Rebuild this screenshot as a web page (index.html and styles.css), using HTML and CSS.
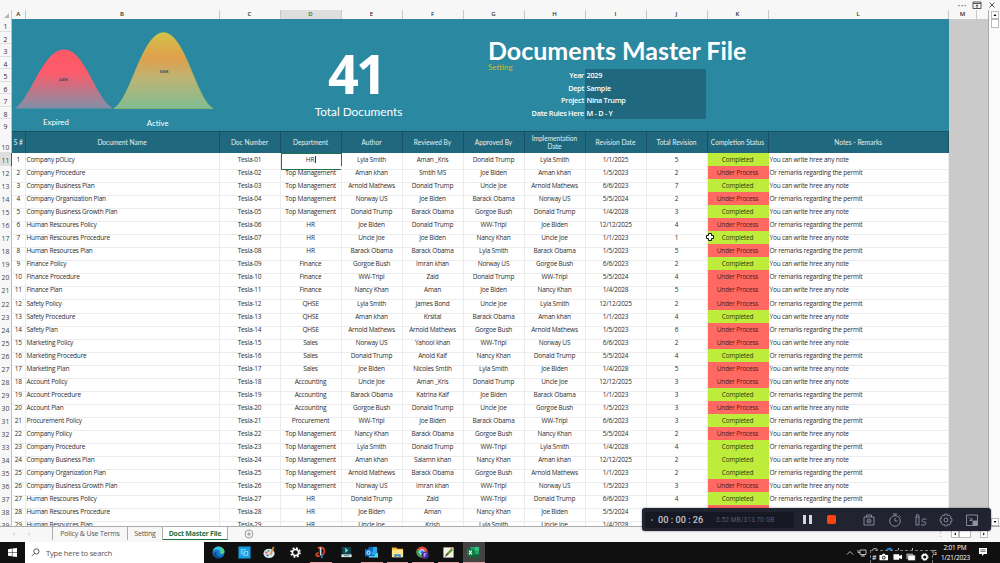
FILE: index.html
```html
<!DOCTYPE html>
<html lang="en">
<head>
    <meta charset="UTF-8">
    <meta name="viewport" content="width=device-width, initial-scale=1.0">
    <title>Documents Master File</title>
    <link rel="stylesheet" href="styles.css">
</head>
<body>
    <div class="window-bar">
        <span class="dots">···</span>
        <svg class="win-icon" viewBox="0 0 10 10"><path d="M1 2h8v6.500H1zM1 3.500h8M5 8V5M3.700 6L5 4.800 6.300 6" /></svg>
        <svg class="win-icon win-close" viewBox="0 0 10 10"><path d="M2.500 2.500l5 5M7.500 2.500l-5 5" /></svg>
    </div>

    <div class="workspace">
        <div class="sheet">
            <div class="row col-letters">
                <span class="corner"><svg viewBox="0 0 5 5"><path d="M5 0v5H0z" /></svg></span>
                <span>A</span><span>B</span><span>C</span><span class="selected">D</span><span>E</span><span>F</span><span>G</span><span>H</span><span>I</span><span>J</span><span>K</span><span>L</span><span>M</span><span></span>
            </div>

            <div class="banner-row">
                <div class="banner-numbers">
                    <span>1</span><span>2</span><span>3</span><span>4</span><span>5</span><span>6</span><span>7</span><span>8</span><span>9</span>
                </div>
                <div class="banner">
                    <div class="chart">
                        <svg viewBox="0 0 208 92">
                            <defs>
                                <linearGradient id="expired" x1="0" y1="0" x2="0" y2="1">
                                    <stop offset="0" stop-color="#ff5866" />
                                    <stop offset="0.400" stop-color="#fb5c6b" />
                                    <stop offset="1" stop-color="#8090a8" />
                                </linearGradient>
                                <linearGradient id="active" x1="0" y1="0" x2="0" y2="1">
                                    <stop offset="0" stop-color="#d2c247" />
                                    <stop offset="0.340" stop-color="#dfa04d" />
                                    <stop offset="0.600" stop-color="#bdb473" />
                                    <stop offset="1" stop-color="#80bd92" />
                                </linearGradient>
                            </defs>
                            <path fill="url(#expired)" d="M3 89.500C19 79 31 30.500 52 30.500S83 79 101 89.500z" />
                            <path fill="url(#active)" stroke="#c5c056" stroke-width="0.800" stroke-opacity="0.600" d="M102 89.500C119 80 130 13.500 151.500 13.500S184 80 201 89.500z" />
                            <text class="pct" x="51.500" y="62">44%</text>
                            <text class="pct" x="152" y="54">56%</text>
                        </svg>
                        <div class="chart-labels">
                            <span>Expired</span>
                            <span class="label-active">Active</span>
                        </div>
                    </div>
                    <div class="total">
                        <div class="total-number">41</div>
                        <div class="total-label">Total Documents</div>
                    </div>
                    <div class="info">
                        <h1>Documents Master File</h1>
                        <a class="setting">Setting</a>
                        <dl>
                            <dt>Year</dt><dd>2029</dd>
                            <dt>Dept</dt><dd>Sample</dd>
                            <dt>Project</dt><dd>Nina Trump</dd>
                            <dt>Date Rules Here</dt><dd>M - D - Y</dd>
                        </dl>
                    </div>
                </div>
            </div>

            <div class="row table-head">
                <span class="num">10</span>
                <span>S #</span><span>Document Name</span><span>Doc Number</span><span>Department</span><span>Author</span><span>Reviewed By</span><span>Approved By</span><span>Implementation<br>Date</span><span>Revision Date</span><span>Total Revision</span><span>Completion Status</span><span>Notes - Remarks</span>
            </div>
            <div id="rows"></div>
        </div>

        <div class="scrollbar">
            <svg class="arrow" viewBox="0 0 8 8"><path d="M2 5.200h4L4 2.800z" /></svg>
            <div class="thumb"></div>
            <svg class="arrow arrow-down" viewBox="0 0 8 8"><path d="M2 2.800h4L4 5.200z" /></svg>
        </div>
    </div>

    <div class="tabs">
        <span class="nav">‹</span><span class="nav">›</span>
        <span class="tab tab-policy">Policy &amp; Use Terms</span>
        <span class="tab tab-setting">Setting</span>
        <span class="tab tab-active">Doct Master File</span>
        <svg class="add" viewBox="0 0 10 10"><circle cx="5" cy="5" r="4" /><path d="M2.800 5h4.400M5 2.800v4.400" /></svg>
        <div class="h-scroll">
            <span class="grip">⋮</span>
            <svg class="arrow" viewBox="0 0 8 8"><path d="M5.200 2v4L2.800 4z" /></svg>
            <div class="h-thumb"></div>
            <svg class="arrow" viewBox="0 0 8 8"><path d="M2.800 2v4L5.200 4z" /></svg>
        </div>
    </div>

    <div class="taskbar">
        <div class="start">
            <svg viewBox="0 0 9 9"><path fill="#fff" d="M0 1.200L3.900.600v3.600H0zM4.400.500L9 0v4.200H4.400zM0 4.700h3.900v3.600L0 7.700zM4.400 4.700H9V9l-4.600-.600z" /></svg>
        </div>
        <div class="search">
            <svg viewBox="0 0 10 10"><circle cx="6" cy="3.800" r="2.900" /><path d="M3.900 5.900L.800 9" /></svg>
            Type here to search
        </div>
        <div class="apps">
            <span class="app">
                <svg viewBox="0 0 14 14"><circle cx="7" cy="7" r="6.400" fill="#1778c9" /><path fill="#35c5d8" d="M.900 5.500C2-.500 11-1.500 13.200 4.800c.600 2-.700 3.700-2.600 3.700-1.900 0-2.700-.700-2-2C9 3.500 3.500 2.500.900 5.500z" /><path fill="#5bd26a" d="M9 1.200c2.600.900 4.800 3.500 4.400 5.500-.500 1.600-2.700 2.200-4.200 1.500C11 6 11 3 9 1.200z" /><path fill="#0b4a93" d="M4.800 6.500c-1 3 1.800 6 6.500 5-3 3-9 2-9.500-2.500C2 7 3.500 6 4.800 6.500z" /></svg>
            </span>
            <span class="app">
                <svg viewBox="0 0 14 14"><path fill="#139de2" d="M.500.500h13v13H.500z" /><path fill="none" stroke="#a3dcfa" d="M8.500 4H3.500v4.500H7V6.500H5M7 6h3.500v4H5.500" /></svg>
            </span>
            <span class="app">
                <svg viewBox="0 0 14 14"><ellipse cx="6.500" cy="8" rx="6" ry="5" fill="#d9e4ee" /><circle cx="3.600" cy="7" r="1.200" fill="#e34d3c" /><circle cx="6" cy="5.200" r="1.200" fill="#4cae54" /><circle cx="5" cy="10" r="1.200" fill="#2f80d1" /><path stroke="#d99342" stroke-width="1.800" d="M8 9.500L11.500 1" /></svg>
            </span>
            <span class="app">
                <svg viewBox="0 0 14 14"><circle cx="7" cy="7" r="4.800" fill="none" stroke="#fff" stroke-width="1.800" stroke-dasharray="2 1.770" /><circle cx="7" cy="7" r="3.300" fill="none" stroke="#fff" stroke-width="1.600" /></svg>
            </span>
            <span class="app open">
                <svg viewBox="0 0 14 14"><path fill="none" stroke="#d63f24" stroke-width="2" d="M6 10.500C1 12 1.500 7.500 5 7.500M4 2.500c4-2.500 8 0 7 4-.500 2-2 3-2 3.500" /><path fill="#c7dff0" d="M6 1l2 1v7L6.500 11z" /><path stroke="#2878c8" stroke-width="2" d="M8.500 9v4" /></svg>
            </span>
            <span class="app">
                <svg viewBox="0 0 14 14"><path fill="#12414e" d="M2 1h10v8H2z" /><path fill="#74efd1" d="M5 2l4 2.700L5 7.500l1-2.800z" /><path fill="#e4ecee" d="M1.500 9h11v3h-11z" /><path fill="#298b9e" d="M4 10h6v1H4z" /></svg>
            </span>
            <span class="app open">
                <svg viewBox="0 0 14 14"><path fill="#28a8ea" d="M4 1h9v9H4z" /><path fill="#0364b8" d="M4 1h4.500v5H4z" /><path fill="#50d9ff" d="M4 8l5 3 5-4v5.500H4z" /><path fill="#0f78d4" d="M0 3.500h7.500V11H0z" /><circle cx="3.800" cy="7.200" r="1.700" fill="none" stroke="#fff" /></svg>
            </span>
            <span class="app open">
                <svg viewBox="0 0 14 14"><path fill="#f2b835" d="M1 1.500h4.500L7 3h6v9H1z" /><path fill="#ffe58a" d="M1 4h12v8H1z" /><path fill="#348fd8" d="M3.500 9h7v3.500h-2v-1.500h-3v1.500h-2z" /></svg>
            </span>
            <span class="app open">
                <svg viewBox="0 0 14 14"><circle cx="6.500" cy="6.500" r="6" fill="#e34a3d" /><path fill="#34a853" d="M6.500 6.500L1.300 3.500a6 6 0 0 0 5 9z" /><path fill="#fbbc05" d="M6.500 6.500h6a6 6 0 0 1-6 6z" /><circle cx="6.500" cy="6.500" r="2.600" fill="#4285f4" stroke="#fff" /><circle cx="9.800" cy="9.800" r="3.900" fill="#4a2b9d" /><path fill="none" stroke="#ddd0ff" stroke-width=".800" d="M8.800 12V8h2.500M8.800 9.800h2" /></svg>
            </span>
            <span class="app open">
                <svg viewBox="0 0 14 14"><path fill="#f3f2e6" d="M1.500 1.500h11v11h-11z" /><path stroke="#61912c" stroke-width="2.400" d="M4.500 10L11 3.500" /><path stroke="#333" d="M3 11.500l3.500-3" /><path stroke="#e7a72c" d="M9 3l3-1" /></svg>
            </span>
            <span class="app open current">
                <svg viewBox="0 0 14 14"><path fill="#21a366" d="M3.500 1H13v12H3.500z" /><path fill="#33c481" d="M8.500 1H13v4H8.500z" /><path fill="#107c41" d="M3.500 5h5v4h-5z" /><path fill="#185c37" d="M3.500 9H13v4H3.500z" /><path fill="#107c41" d="M0 3.500h7.500v7H0z" /><path stroke="#fff" stroke-width="1.100" d="M2.200 5l3 4M5.200 5l-3 4" /></svg>
            </span>
        </div>
        <div class="tray">
            <svg class="chevron" viewBox="0 0 8 8"><path d="M1 5.500l3-3 3 3" /></svg>
            <svg class="monitor" viewBox="0 0 10 8"><path d="M3 1h6v4.500H3zM1 1v2.500h2M6 5.500V7M4 7h4" /></svg>
            <svg class="tray-hidden" viewBox="0 0 60 7"><path d="M3 3.500a2.500 2 0 0 1 5 0M29 1v4M43 1v4" /><circle class="blue" cx="20" cy="4" r="3.200" /></svg>
            <span class="lang">G</span>
            <div class="clock">2:01 PM<br>1/21/2023</div>
            <svg class="note" viewBox="0 0 10 10"><path fill="#fff" d="M1 1h8v6H6L4 9V7H1z" /><path stroke="#333" stroke-width=".700" d="M2.500 2.800h5M2.500 4.400h5" /></svg>
        </div>
        <div class="capture-bar">
            <span>#</span>
            <svg viewBox="0 0 10 8"><path fill="#fff" d="M1 2h2l1-1.500h2L7 2h2.500v5.500H.500V2z" /><circle cx="5" cy="4.700" r="1.500" fill="none" stroke="#111" /></svg>
            <svg viewBox="0 0 10 8"><path fill="#fff" d="M.500 1h6v2l3-1.500v5l-3-1.500v2h-6z" /></svg>
            <svg viewBox="0 0 10 8"><path fill="#bbb" d="M.500.500h7V6h-7z" /><path fill="#fff" stroke="#222" stroke-width=".500" d="M2 2h7.700v5.700H2z" /></svg>
            <svg viewBox="0 0 10 8"><circle cx="5" cy="4" r="2.500" fill="none" stroke="#fff" stroke-width="1.600" /><circle cx="5" cy="4" r="3.500" fill="none" stroke="#fff" stroke-dasharray="1.500 1.250" /></svg>
        </div>
    </div>

    <svg class="cursor" viewBox="0 0 10 10"><path d="M3.500 1.500h3v2h2v3h-2v2h-3v-2h-2v-3h2z" /></svg>

    <div class="recorder">
        <div class="rec-time"><i></i><b>00 : 00 : 26</b><small>3.52 MB/313.70 GB</small></div>
        <div class="pause"></div>
        <div class="stop"></div>
        <div class="rec-tools">
            <svg viewBox="0 0 14 14"><path d="M2 4h10v8H2zM4.500 4V2h5v2" /><circle cx="7" cy="8" r="2" /><circle cx="7" cy="8" r=".400" /></svg>
            <svg viewBox="0 0 14 14"><circle cx="7" cy="8" r="5.300" /><path d="M5 1h4M7 1v1.500M7 5v3h2.500M11.500 2.500l1.200 1.200" /></svg>
            <svg viewBox="0 0 14 14"><path d="M2 3l1.500-2L5 3v9H2zM2 4h3M12.500 6H9.500C7.500 6 7.500 9 9.500 9h1C12.500 9 12.500 12 10 12H7" /></svg>
            <svg viewBox="0 0 14 14"><path d="M5.800 1.200h2.400l.500 1.600 1.600-.700 1.700 1.700-.700 1.500 1.600.500v2.400l-1.600.500.700 1.600-1.700 1.700-1.600-.700-.500 1.600H5.800l-.500-1.600-1.600.700L2 10.300l.700-1.600-1.600-.500V5.800l1.600-.500L2 3.800l1.700-1.700 1.600.700z" /><circle cx="7" cy="7" r="2" /></svg>
            <svg viewBox="0 0 14 14"><path d="M1.500 2h11v10.500h-11zM4 4.500L7 7.500M7 5v2.500H4.500" /><path class="solid" d="M8 8h4v4H8z" /></svg>
        </div>
    </div>

    <script src="script.js"></script>
</body>
</html>
```
FILE: styles.css
```css
* {
    margin: 0;
    padding: 0;
    box-sizing: border-box;
}

body {
    width: 1000px;
    height: 563px;
    overflow: hidden;
    position: relative;
    display: flex;
    flex-direction: column;
    background-color: #f7f7f7;
    font-family: "Open Sans", sans-serif;
    font-size: 6.5px;
    color: #2c2c2c;
}

svg {
    display: block;
}

.window-bar {
    height: 10px;
    display: flex;
    justify-content: flex-end;
    align-items: center;
    padding-right: 3px;
    gap: 5px;
}

.dots {
    font-size: 10px;
    line-height: 10px;
    letter-spacing: 0.5px;
    color: #555;
}

.win-icon {
    width: 10px;
    height: 10px;
    fill: none;
    stroke: #444;
    stroke-width: 0.9;
}

.workspace {
    height: 517px;
    display: flex;
    border-bottom: 1px solid #ababab;
}

.sheet {
    width: 989px;
    overflow: hidden;
    background: linear-gradient(to right, #fff 948px, #cacaca 948px);
    border-right: 1px solid #aaa;
}

.row {
    display: grid;
    grid-template-columns: 12px 13.5px 194px repeat(8, 61px) 61px 180.5px 28px 12px;
}

/* column letters */
.col-letters {
    height: 9px;
    background-color: #f7f7f7;
}

.col-letters span {
    text-align: center;
    line-height: 9px;
    font-size: 6px;
    font-weight: 600;
    border-right: 1px solid #c8c8c8;
}

.col-letters .selected {
    background-color: #dedede;
    border-bottom: 1px solid #217346;
    color: #217346;
}

.col-letters .corner {
    display: flex;
    justify-content: flex-end;
    align-items: flex-end;
    padding: 0 2px 2px 0;
}

.corner svg {
    width: 5px;
    height: 5px;
    fill: #b5b5b5;
}

/* banner */
.banner-row {
    height: 112px;
    display: flex;
}

.banner-numbers {
    width: 12px;
    background-color: #f7f7f7;
    display: flex;
    flex-direction: column;
    border-right: 1px solid #c0c0c0;
}

.banner-numbers span {
    height: 12.5px;
    line-height: 16px;
    text-align: center;
    font-size: 6.8px;
    border-bottom: 1px solid #ddd;
}

.banner {
    width: 936.5px;
    background-color: #2a88a1;
    color: #fff;
    display: flex;
    font-family: "Century Gothic", Lato, sans-serif;
}

.chart {
    width: 208px;
}

.chart > svg {
    width: 208px;
    height: 92px;
}

.pct {
    font-size: 4.5px;
    font-weight: bold;
    fill: #204a66;
    text-anchor: middle;
}

.chart-labels {
    display: flex;
    padding-left: 31px;
    gap: 78px;
    margin-top: 5px;
    font-size: 7.8px;
    line-height: 12px;
}

.label-active {
    padding-top: 1px;
}

.total {
    width: 268px;
    padding: 23px 0 0 9px;
    text-align: center;
}

.total-number {
    margin-right: 5px;
    font-family: "Open Sans", sans-serif;
    font-size: 54px;
    font-weight: bold;
    line-height: 62px;
    letter-spacing: -3px;
}

.total-label {
    font-size: 11.8px;
    line-height: 16px;
}

.info {
    width: 240px;
    padding-top: 19px;
}

.info h1 {
    font-size: 25px;
    line-height: 25px;
    white-space: nowrap;
}

.setting {
    display: block;
    height: 6px;
    line-height: 8px;
    font-size: 8px;
    color: #d8b72a;
}

.info dl {
    display: grid;
    grid-template-columns: 97px 121px;
    grid-auto-rows: 12.5px;
    font-family: "Open Sans", sans-serif;
    font-size: 7.3px;
    line-height: 12.5px;
    letter-spacing: -0.28px;
    font-weight: 600;
}

.info dt {
    text-align: right;
    padding-right: 1px;
}

.info dd {
    background-color: #1f687d;
    padding-left: 1.5px;
}

/* table */
.table-head {
    height: 22px;
}

.table-head span {
    background-color: #1f687d;
    color: #e3f0f3;
    border-right: 1px solid #195164;
    border-top: 1px solid #195164;
    display: flex;
    align-items: center;
    justify-content: center;
    text-align: center;
    font-family: "Century Gothic", Lato, sans-serif;
    font-size: 6.6px;
    line-height: 8px;
    padding-bottom: 2px;
    white-space: nowrap;
}

.row .num {
    background-color: #f7f7f7;
    color: #444;
    border: 0;
    border-bottom: 1px solid #ddd;
    border-right: 1px solid #c0c0c0;
    font-family: "Open Sans", sans-serif;
    font-size: 6.8px;
    line-height: 16px;
    letter-spacing: 0;
    padding: 0;
    text-align: center;
}

.table-head .num {
    align-items: flex-end;
    line-height: 8px;
}

.data {
    height: 13.05px;
}

.data span {
    border-right: 1px solid #ececec;
    border-bottom: 1px solid #ececec;
    text-align: center;
    line-height: 13px;
    letter-spacing: -0.2px;
    white-space: nowrap;
}

.data .left {
    text-align: left;
    padding-left: 1px;
}

.data .completed {
    background-color: #bdec3b;
    border-color: #bdec3b;
    color: #2d3a10;
}

.data .process {
    background-color: #ff6961;
    border-color: #ff6961;
    color: #551a1a;
}

.data .num.selected {
    background-color: #dedede;
    border-right-color: #217346;
}

.data .editing {
    border: 1px solid #217346;
    line-height: 11px;
}

.caret {
    display: inline-block;
    width: 1px;
    height: 7px;
    margin-left: 1px;
    background-color: #333;
    vertical-align: -1px;
}

/* scrollbars */
.scrollbar {
    width: 11px;
    padding: 1px 1px 0 2px;
    background-color: #fbfbfb;
    display: flex;
    flex-direction: column;
}

.arrow {
    width: 8px;
    height: 8px;
    background-color: #fff;
    border: 1px solid #bbb;
    overflow: visible;
}

.thumb {
    width: 8px;
    height: 9px;
    border: 1px solid #bbb;
    background-color: #fff;
}

.arrow-down {
    margin-top: auto;
}

/* sheet tabs */
.tabs {
    height: 15px;
    display: flex;
    font-size: 7px;
    line-height: 14px;
    letter-spacing: -0.15px;
    color: #555;
}

.nav {
    width: 15px;
    padding-left: 13px;
    color: #aaa;
}

.tab {
    height: 13px;
    text-align: center;
    white-space: nowrap;
    border-right: 1px solid #ababab;
}

.tab-policy {
    width: 76px;
    margin-left: 22px;
    border-left: 1px solid #ababab;
}

.tab-setting {
    width: 35px;
}

.tab-active {
    width: 65px;
    background-color: #fff;
    color: #217346;
    font-weight: bold;
    letter-spacing: -0.25px;
    border-bottom: 1px solid #217346;
}

.add {
    width: 10px;
    height: 10px;
    margin: 2px 0 0 16px;
    fill: none;
    stroke: #777;
    stroke-width: 0.7;
}

.h-scroll {
    margin: 3px 12px 0 auto;
    display: flex;
}

.grip {
    line-height: 8px;
    margin-right: 7px;
    color: #999;
}

.h-thumb {
    width: 12px;
    height: 8px;
    margin-right: 9px;
    border: 1px solid #bbb;
    background-color: #fff;
}

/* taskbar */
.taskbar {
    height: 21px;
    position: relative;
    display: flex;
    background-color: #101010;
    color: #fff;
}

.start {
    width: 25px;
    padding: 6px 0 0 8px;
}

.start svg {
    width: 9px;
    height: 9px;
}

.search {
    width: 179px;
    background-color: #fff;
    color: #555;
    display: flex;
    align-items: center;
    padding-left: 6px;
    gap: 6px;
    font-size: 7.7px;
    letter-spacing: -0.25px;
}

.search svg {
    width: 9px;
    height: 9px;
    fill: none;
    stroke: #333;
    stroke-width: 0.9;
}

.apps {
    display: flex;
    padding-left: 4px;
}

.app {
    width: 21.5px;
    height: 21px;
    margin-right: 4px;
    padding: 4px 0 0 4px;
}

.app svg {
    width: 13px;
    height: 13px;
}

.open {
    border-bottom: 1px solid #e6a3a3;
}

.current {
    background-color: #434343;
}

.tray {
    flex: 1;
    display: flex;
    justify-content: flex-end;
    padding-right: 12px;
}

.chevron,
.monitor,
.tray-hidden {
    fill: none;
    stroke: #ccc;
    stroke-width: 0.9;
    margin-top: 7px;
}

.chevron {
    width: 8px;
    height: 8px;
    margin-right: 3px;
}

.monitor {
    width: 10px;
    height: 8px;
}

.tray-hidden {
    width: 65px;
    height: 7px;
    margin-top: 5px;
}

.blue {
    fill: #1682e0;
    stroke: none;
}

.lang {
    width: 9px;
    line-height: 22px;
}

.clock {
    width: 28px;
    font-size: 6.5px;
    line-height: 9.5px;
    letter-spacing: -0.2px;
    padding-top: 1px;
    text-align: center;
    margin-right: 9px;
    white-space: nowrap;
}

.note {
    width: 10px;
    height: 10px;
    margin-top: 5px;
}

.capture-bar {
    position: absolute;
    left: 870px;
    top: 8px;
    width: 63px;
    height: 13px;
    display: flex;
    align-items: center;
    gap: 4px;
    padding-left: 1px;
    background-color: #111;
    border: 1px dashed #777;
    border-bottom: 0;
    font-size: 7px;
}

.capture-bar span {
    width: 3px;
}

.capture-bar svg {
    width: 9.5px;
    height: 8px;
}

/* overlays */
.cursor {
    position: absolute;
    left: 705px;
    top: 232px;
    width: 10px;
    height: 10px;
    fill: #fff;
    stroke: #111;
}

.recorder {
    position: absolute;
    left: 642px;
    top: 508px;
    width: 349px;
    height: 23px;
    display: flex;
    align-items: center;
    background-color: #212331;
    border-radius: 3px;
    box-shadow: 0 0 2px rgba(0, 0, 0, 0.5);
    padding-left: 3px;
}

.rec-time {
    width: 149px;
    height: 16px;
    display: flex;
    align-items: center;
    padding-left: 6px;
    background-color: #161824;
    border-radius: 2px;
}

.rec-time i {
    width: 2px;
    height: 2px;
    border-radius: 50%;
    background-color: #777;
}

.rec-time b {
    width: 58px;
    margin-left: 5px;
    font-family: Roboto, sans-serif;
    font-size: 9.2px;
    font-weight: 500;
    color: #c4c6d0;
    white-space: nowrap;
}

.rec-time small {
    font-family: Roboto, sans-serif;
    font-size: 6.5px;
    letter-spacing: 0.1px;
    color: #5a5c68;
}

.pause {
    width: 9px;
    height: 9px;
    margin-left: 9px;
    border: solid #d5d7e2;
    border-width: 0 3px;
}

.stop {
    width: 9px;
    height: 9px;
    margin-left: 15px;
    border-radius: 2px;
    background-color: #ff4310;
}

.rec-tools {
    display: flex;
    margin-left: 26px;
    gap: 11.8px;
}

.rec-tools svg {
    width: 14px;
    height: 14px;
    fill: none;
    stroke: #9093a5;
    stroke-width: 0.9;
}

.rec-tools .solid {
    fill: #9093a5;
}
```
FILE: script.js
```js
const DOCS = [
    ['Company pOLicy', 'HR', 'Aman _Kris', 'Donald Trump', 5, 'C'],
    ['Company Procedure', 'Top Management', 'Smtih MS', 'Joe Biden', 2, 'U'],
    ['Company Business Plan', 'Top Management', 'Donald Trump', 'Uncle Joe', 7, 'C'],
    ['Company Organization Plan', 'Top Management', 'Joe Biden', 'Barack Obama', 2, 'U'],
    ['Company Business Growth Plan', 'Top Management', 'Barack Obama', 'Gorgoe Bush', 3, 'C'],
    ['Human Rescoures Policy', 'HR', 'Donald Trump', 'WW-Tripl', 4, 'U'],
    ['Human Rescoures Procedure', 'HR', 'Joe Biden', 'Nancy Khan', 1, 'C'],
    ['Human Resources Plan', 'HR', 'Barack Obama', 'Lyla Smith', 5, 'U'],
    ['Finance Policy', 'Finance', 'Imran khan', 'Norway US', 2, 'C'],
    ['Finance Procedure', 'Finance', 'Zaid', 'Donald Trump', 4, 'U'],
    ['Finance Plan', 'Finance', 'Aman', 'Joe Biden', 5, 'U'],
    ['Safety Policy', 'QHSE', 'James Bond', 'Uncle Joe', 2, 'U'],
    ['Safety Procedure', 'QHSE', 'Krsital', 'Barack Obama', 4, 'C'],
    ['Safety Plan', 'QHSE', 'Arnold Mathews', 'Gorgoe Bush', 6, 'U'],
    ['Marketing Policy', 'Sales', 'Yahool khan', 'WW-Tripl', 2, 'U'],
    ['Marketing Procedure', 'Sales', 'Anold Kaif', 'Nancy Khan', 4, 'C'],
    ['Marketing Plan', 'Sales', 'Nicoles Smtih', 'Lyla Smith', 5, 'U'],
    ['Account Policy', 'Accounting', 'Aman _Kris', 'Donald Trump', 3, 'U'],
    ['Account Procedure', 'Accounting', 'Katrina Kaif', 'Joe Biden', 3, 'C'],
    ['Account Plan', 'Accounting', 'Donald Trump', 'Uncle Joe', 3, 'U'],
    ['Procurement Policy', 'Procurement', 'Joe Biden', 'Barack Obama', 3, 'C'],
    ['Company Policy', 'Top Management', 'Barack Obama', 'Gorgoe Bush', 2, 'U'],
    ['Company Procedure', 'Top Management', 'Donald Trump', 'WW-Tripl', 4, 'C'],
    ['Company Business Plan', 'Top Management', 'Salamn khan', 'Nancy Khan', 2, 'C'],
    ['Company Organization Plan', 'Top Management', 'Barack Obama', 'Gorgoe Bush', 2, 'C'],
    ['Company Business Growth Plan', 'Top Management', 'Imran khan', 'WW-Tripl', 3, 'U'],
    ['Human Rescoures Policy', 'HR', 'Zaid', 'WW-Tripl', 4, 'C'],
    ['Human Rescoures Procedure', 'HR', 'Aman', 'Nancy Khan', '', 'U'],
    ['Human Resources Plan', 'HR', 'Krish', 'Lyla Smith', '', 'U']
];

// author and date columns repeat
const AUTHORS = ['Lyla Smith', 'Aman khan', 'Arnold Mathews', 'Norway US', 'Donald Trump', 'Joe Biden',
    'Uncle Joe', 'Barack Obama', 'Gorgoe Bush', 'WW-Tripl', 'Nancy Khan'];
const DATES = ['1/1/2023', '1/5/2023', '6/6/2023', '5/5/2024', '1/4/2028', '12/12/2025'];
const NOTES = ['You can write hree any note', 'Or remarks regarding the permit'];

function rowHtml(doc, i) {
    const [name, dept, reviewer, approver, total, status] = doc;
    const author = AUTHORS[i % AUTHORS.length];
    const date = i === 0 ? '1/1/2025' : DATES[i % DATES.length];
    const note = i < 17 ? NOTES[i % 2] : NOTES[(i + 1) % 2];
    const done = status === 'C';
    // the last two rows have no status text or note
    const filled = i < 27;

    return `<div class="row data">
        <span class="num${i === 0 ? ' selected' : ''}">${i + 11}</span>
        <span>${i + 1}</span>
        <span class="left">${name}</span>
        <span>Tesla-${String(i + 1).padStart(2, '0')}</span>
        <span class="${i === 0 ? 'editing' : ''}">${dept}${i === 0 ? '<i class="caret"></i>' : ''}</span>
        <span>${author}</span>
        <span>${reviewer}</span>
        <span>${approver}</span>
        <span>${author}</span>
        <span>${date}</span>
        <span>${total}</span>
        <span class="${done ? 'completed' : 'process'}">${filled ? (done ? 'Completed' : 'Under Process') : ''}</span>
        <span class="left">${filled ? note : ''}</span>
    </div>`;
}

document.getElementById('rows').innerHTML = DOCS.map(rowHtml).join('');
```
